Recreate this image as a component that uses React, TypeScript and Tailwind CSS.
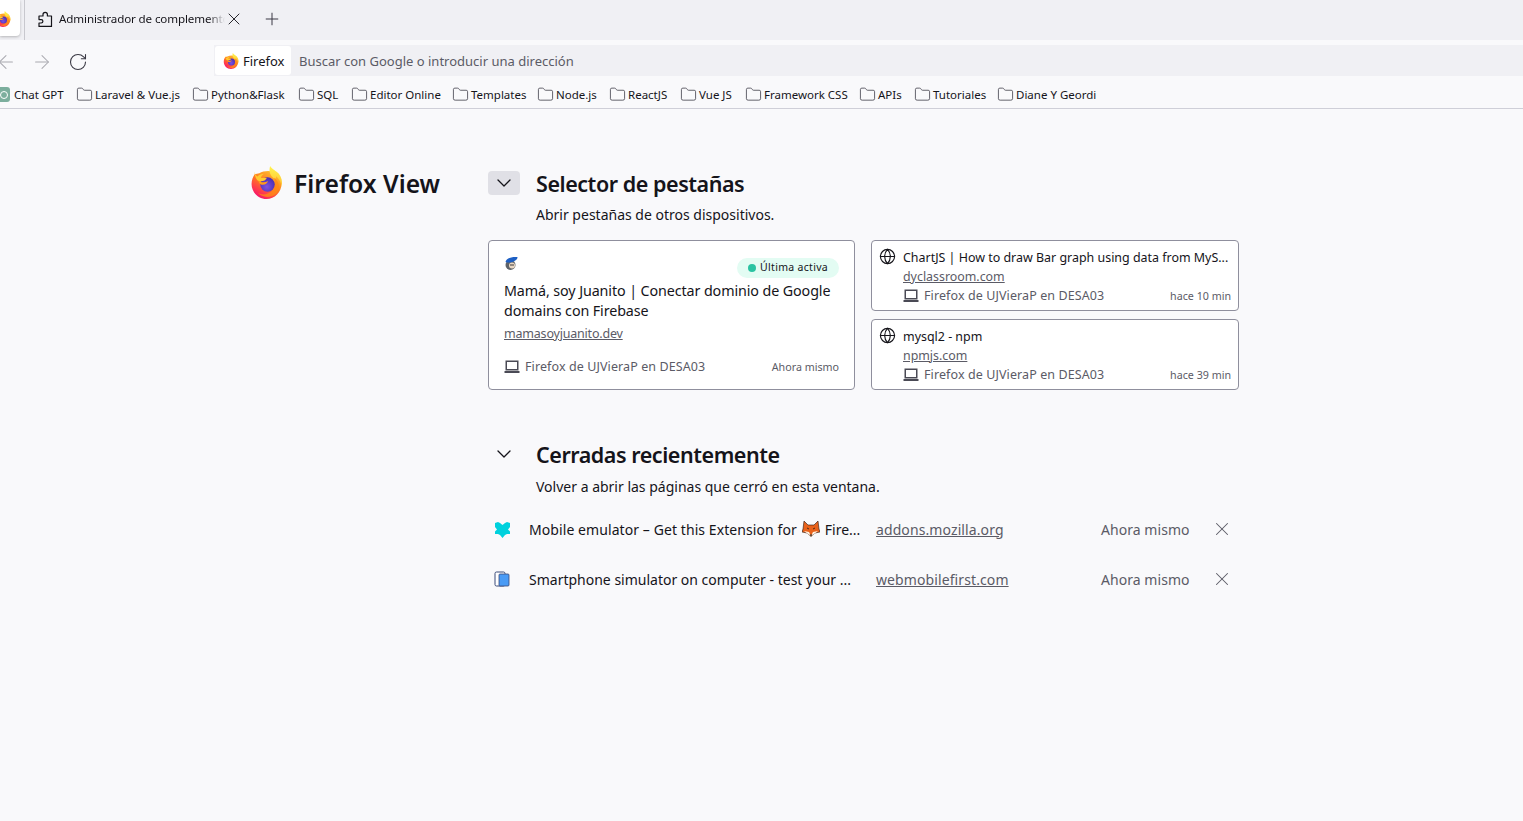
import type { ReactNode } from 'react';
import { ArrowLeft, ArrowRight, ChevronDown, Folder, Globe, Plus, RotateCw, X } from 'lucide-react';

const bookmarks = [
  { label: 'Laravel & Vue.js', w: 'w-[85px]' },
  { label: 'Python&Flask', w: 'w-[75px]' },
  { label: 'SQL', w: 'w-[22px]' },
  { label: 'Editor Online', w: 'w-[70px]' },
  { label: 'Templates', w: 'w-[54px]' },
  { label: 'Node.js', w: 'w-[41px]' },
  { label: 'ReactJS', w: 'w-[40px]' },
  { label: 'Vue JS', w: 'w-[34px]' },
  { label: 'Framework CSS', w: 'w-[83px]' },
  { label: 'APIs', w: 'w-[24px]' },
  { label: 'Tutoriales', w: 'w-[52px]' },
  { label: 'Diane Y Geordi', w: 'w-[79px]' },
];

function FirefoxLogo({ id, size }: { id: string; size: number }) {
  return (
    <svg width={size} height={size} viewBox="0 0 32 32" className="shrink-0">
      <defs>
        <linearGradient id={`${id}-body`} x1="0.8" y1="0.1" x2="0.25" y2="0.95">
          <stop offset="0" stopColor="#ffbd2e" />
          <stop offset="0.45" stopColor="#ff7a1f" />
          <stop offset="0.8" stopColor="#ff3750" />
          <stop offset="1" stopColor="#f5156c" />
        </linearGradient>
        <linearGradient id={`${id}-flame`} x1="0.5" y1="0" x2="0.5" y2="1">
          <stop offset="0" stopColor="#fff44f" />
          <stop offset="1" stopColor="#ffc02e" />
        </linearGradient>
        <radialGradient id={`${id}-globe`} cx="0.45" cy="0.65" r="0.6">
          <stop offset="0" stopColor="#7d52e0" />
          <stop offset="1" stopColor="#4b2fb5" />
        </radialGradient>
      </defs>
      <path d="M4.500 8C3 10.500 1.500 13.500 1.500 17.500 1.500 25.500 8 32 16 32s14.500-6.500 14.500-14.500c0-4-1.500-7.500-4-10C22 4 14 4 9 7Z" fill={`url(#${id}-body)`} />
      <path d="M19.500 0c-.5 4.500 3 7 6 10 3.500 3.400 5 7 5 10.500 1.200-5 .3-9.500-2.500-13C25.500 4.500 21.500 3.500 19.500 0ZM19.500 0c-1.500 5 0 10 4.500 12.300 1 .5 1.500-1.300 1.500-2.300Z" fill={`url(#${id}-flame)`} />
      <path d="M23.500 11.500c2.800 2.200 4.500 5 4.500 8.500 0 5.800-5 10-11.300 10-3.700 0-7-1.500-9-4 2.300 1.300 4.800 1.800 7.300 1.400 4.700-.8 8-4.200 8.700-8.400.4-2.600.3-5.300-.2-7.500Z" fill="#ff8a16" opacity="0.8" />
      <circle cx="17" cy="18" r="7" fill={`url(#${id}-globe)`} />
      <path d="M4.500 5.500c.3 2.200 1.200 3.800 2.800 4.700C8.800 8.500 11 7.500 13.500 7.500c-1.700 1.400-2.500 2.500-3 3.900 1.500.3 3.500.3 5.800.2-.8 2-3 3.100-5.800 3.300C7 15.200 4.700 11.500 4.500 5.500Z" fill="#ffc92e" />
      <path d="M8 14c3.300 2.300 6.800 2.200 9.500.6-.8 2.800-3.500 4-6.200 3.500C9.600 17.800 8.500 16.200 8 14Z" fill="#ff9b1a" />
    </svg>
  );
}

function LaptopIcon() {
  return (
    <svg width="16" height="14" viewBox="0 0 16 14" className="shrink-0 text-[#4a4a55]">
      <rect x="2.250" y="1.250" width="11.500" height="8.500" fill="none" stroke="currentColor" strokeWidth="1.500" />
      <rect x="0.500" y="11" width="15" height="2" fill="currentColor" />
    </svg>
  );
}

function SyncedMeta({ time }: { time: string }) {
  return (
    <div className="flex items-center justify-between text-[#5b5b66]">
      <div className="flex items-center gap-[5px] text-[12.5px] tracking-[0.1px]">
        <LaptopIcon />
        <span>Firefox de UJVieraP en DESA03</span>
      </div>
      <span className="text-[10.7px]">{time}</span>
    </div>
  );
}

function SmallCard({ title, domain, time }: { title: string; domain: string; time: string }) {
  return (
    <div className="h-[71px] rounded border border-[#8f8f9d] bg-white pl-[7px] pr-[7px] pt-[7px] flex gap-[7px]">
      <Globe size={17} strokeWidth={1.6} className="text-[#15141a] shrink-0" />
      <div className="min-w-0 flex-1 flex flex-col">
        <div className="whitespace-nowrap h-[20px] leading-[20px] text-[12.45px] text-[#15141a]">{title}</div>
        <div className="h-[18px] leading-[18px] text-[12.4px] text-[#5b5b66] underline">{domain}</div>
        <div className="mt-[1px]">
          <SyncedMeta time={time} />
        </div>
      </div>
    </div>
  );
}

function SectionHead({ title, sub, active, subGap }: { title: string; sub: string; active?: boolean; subGap: string }) {
  return (
    <>
      <div className="flex items-center gap-[16px]">
        <div className={`w-[32px] h-[24px] mb-[2px] rounded flex items-center justify-center ${active ? 'bg-[#e0e0e6]' : ''}`}>
          <ChevronDown size={24} strokeWidth={1.3} className="text-[#15141a]" />
        </div>
        <h2 className="text-[21.5px] leading-[30px] font-semibold tracking-[-0.45px] text-[#15141a]">{title}</h2>
      </div>
      <p className={`ml-[48px] ${subGap} leading-[20px] text-[14px] text-[#15141a]`}>{sub}</p>
    </>
  );
}

function ClosedRow({ icon, title, domain }: { icon: ReactNode; title: ReactNode; domain: string }) {
  return (
    <div className="h-[50px] flex items-center text-[14px]">
      <div className="w-[41px] pl-[6px] flex items-center">{icon}</div>
      <div className="w-[347px] text-[#15141a] whitespace-nowrap flex items-center">{title}</div>
      <div className="text-[#5b5b66] underline tracking-[0.1px]">{domain}</div>
      <div className="flex-1" />
      <div className="text-[#5b5b66] w-[110px] tracking-[0.05px]">Ahora mismo</div>
      <X size={22} strokeWidth={1.1} className="text-[#5b5b66] mr-[6px]" />
    </div>
  );
}

export default function App() {
  return (
    <div className="h-[821px] w-[1523px] overflow-hidden bg-[#f9f9fb] font-['Noto_Sans',sans-serif]">
      {/* Tab strip */}
      <div className="h-[40px] bg-[#f0f0f4] flex items-stretch">
        <div className="w-[20px] h-[36px] bg-white rounded-br-[4px] shadow-[0_1px_3px_rgba(0,0,0,0.25)] overflow-hidden flex items-center">
          <div className="-ml-[5px] mt-[2px]">
            <FirefoxLogo id="tab" size={16} />
          </div>
        </div>
        <div className="ml-[4px] w-px bg-[#c8c8ce]" />
        <div className="ml-[13px] flex items-center h-[38px]">
          <svg width="15" height="16" viewBox="0 0 15 16" fill="none" stroke="#15141a" strokeWidth="1.200" strokeLinejoin="round" className="shrink-0">
            <path d="M1 5H5V3.500a2.200 2.200 0 0 1 4.400 0V5h4.100V15.400H1V12h2.200a1.700 1.700 0 0 0 0-3.400H1Z" />
          </svg>
          <div className="ml-[6px] w-[166px] whitespace-nowrap overflow-hidden text-[11.6px] tracking-[-0.12px] text-[#15141a] [mask-image:linear-gradient(to_right,black_90%,transparent)]">
            Administrador de complementos
          </div>
          <X size={20} strokeWidth={1.1} className="-ml-[1px] text-[#15141a]" />
          <Plus size={20} strokeWidth={1.2} className="ml-[18px] text-[#3a3944]" />
        </div>
      </div>

      {/* Nav bar */}
      <div className="h-[36px] flex items-start">
        <div className="w-[214px] h-[36px] pt-[8px] flex items-center">
          <ArrowLeft size={22} strokeWidth={1.1} className="-ml-[5px] text-[#a9a9b0]" />
          <ArrowRight size={22} strokeWidth={1.1} className="ml-[14px] text-[#a9a9b0]" />
          <RotateCw size={20} strokeWidth={1.3} className="ml-[15px] -mt-[1px] text-[#3a3944]" />
        </div>
        <div className="mt-[5px] flex-1 h-[31px] bg-[#f0f0f4] flex items-center">
          <div className="ml-[1px] w-[76px] h-[29px] bg-white rounded-[3px] flex items-center pl-[8px] gap-[4px] text-[13px] text-[#15141a]">
            <FirefoxLogo id="url" size={16} />
            <span className="pt-[2px]">Firefox</span>
          </div>
          <span className="ml-[8px] pt-[2px] text-[13px] text-[#5b5b66]">Buscar con Google o introducir una dirección</span>
        </div>
      </div>

      {/* Bookmarks */}
      <div className="h-[33px] border-b border-[#cfcfd8] flex items-center pt-[5px] text-[11.5px] text-[#15141a] bg-[#f9f9fb]">
        <div className="-ml-[2px] w-[12px] h-[15px] bg-[#7cae9d] rounded-[3px] flex items-center justify-center">
          <div className="w-[8px] h-[8px] rounded-full border border-white" />
        </div>
        <span className="ml-[4px] w-[50px] whitespace-nowrap">Chat GPT</span>
        {bookmarks.map((b) => (
          <div key={b.label} className="ml-[12px] flex items-center gap-[2px]">
            <Folder size={17} strokeWidth={1.1} className="text-[#3a3944]" />
            <span className={`${b.w} whitespace-nowrap`}>{b.label}</span>
          </div>
        ))}
      </div>

      {/* Page */}
      <div className="flex pl-[250px] pt-[57px]">
        <div className="w-[238px] flex items-start gap-[11px]">
          <FirefoxLogo id="view" size={33} />
          <h1 className="mt-[1px] text-[24.7px] leading-[34px] font-semibold text-[#15141a]">Firefox View</h1>
        </div>

        <div className="w-[751px]">
          <div className="pt-[3px]">
            <SectionHead title="Selector de pestañas" sub="Abrir pestañas de otros dispositivos." active subGap="mt-[6px]" />
          </div>

          <div className="mt-[15px] grid grid-cols-[367px_368px] gap-x-[16px]">
            <div className="h-[150px] rounded border border-[#8f8f9d] bg-white px-[15px] pt-[13px]">
              <div className="flex justify-between h-[27px]">
                <svg width="15" height="15" viewBox="0 0 15 15" className="mt-[2px] shrink-0">
                  <circle cx="6.500" cy="9" r="5" fill="#5d6268" />
                  <path d="M1.500 6C2 2.500 7 .5 13.500 1c.3 2-2 4-5 5-3 .8-5.500.6-7 0Z" fill="#1d5fc4" />
                  <circle cx="8" cy="9.500" r="3" fill="#e9d7c3" />
                  <rect x="6" y="8.500" width="4" height="1" fill="#3a3a40" />
                </svg>
                <div className="h-[20px] mt-[4px] px-[11px] rounded-full bg-[#e3fcf3] flex items-center gap-[4px] text-[10.5px] tracking-[0.3px] text-[#15141a]">
                  <span className="w-[8px] h-[8px] rounded-full bg-[#2ac3a2]" />
                  Última activa
                </div>
              </div>
              <div className="text-[14.3px] tracking-[-0.1px] leading-[20px] text-[#15141a]">
                Mamá, soy Juanito | Conectar dominio de Google domains con Firebase
              </div>
              <div className="mt-[3px] text-[12.5px] tracking-[-0.2px] leading-[20px] text-[#5b5b66] underline">mamasoyjuanito.dev</div>
              <div className="mt-[14px]">
                <SyncedMeta time="Ahora mismo" />
              </div>
            </div>

            <div className="flex flex-col gap-[8px]">
              <SmallCard title="ChartJS | How to draw Bar graph using data from MyS..." domain="dyclassroom.com" time="hace 10 min" />
              <SmallCard title="mysql2 - npm" domain="npmjs.com" time="hace 39 min" />
            </div>
          </div>

          <div className="mt-[50px]">
            <SectionHead title="Cerradas recientemente" sub="Volver a abrir las páginas que cerró en esta ventana." subGap="mt-[7px]" />
          </div>

          <div className="mt-[7px]">
            <ClosedRow
              domain="addons.mozilla.org"
              icon={
                <svg width="17" height="17" viewBox="0 0 17 17">
                  <path d="M1 2l3-1 2 1 2.500 2L11 2l2-1 3 1v4l-2 2.500 2 2V13h-3l-2 1-2.500 3L6 14l-2-1H1v-2.500L3 8.500 1 6Z" fill="#00d1dd" />
                </svg>
              }
              title={
                <>
                  <span className="tracking-[0.08px]">Mobile emulator – Get this Extension for</span>
                  <svg width="18" height="18" viewBox="0 0 18 18" className="mx-[5px] shrink-0">
                    <path d="M2 1l4 4h6l4-4 1 8 1 3-5 1-4 4-4-4-5-1 1-3Z" fill="#e8611a" stroke="#2a1a12" strokeWidth="0.600" />
                    <path d="M2 11l5 1 2 4 2-4 5-1-4 3-3 3-3-3Z" fill="#fff1e0" />
                    <path d="M7.500 14.500h3L9 16.500Z" fill="#3a2418" />
                    <path d="M5 8l2 1M13 8l-2 1" stroke="#2a1a12" strokeWidth="0.800" />
                  </svg>
                  <span>Fire...</span>
                </>
              }
            />
            <ClosedRow
              domain="webmobilefirst.com"
              icon={
                <svg width="16" height="16" viewBox="0 0 16 16">
                  <rect x="1" y="1" width="10" height="14" rx="1.500" fill="#fff" stroke="#3a4a78" strokeWidth="1" />
                  <rect x="5" y="3" width="10" height="12" rx="1" fill="#4a9bf5" stroke="#3a4a78" strokeWidth="0.800" />
                </svg>
              }
              title="Smartphone simulator on computer - test your ..."
            />
          </div>
        </div>
      </div>
    </div>
  );
}
